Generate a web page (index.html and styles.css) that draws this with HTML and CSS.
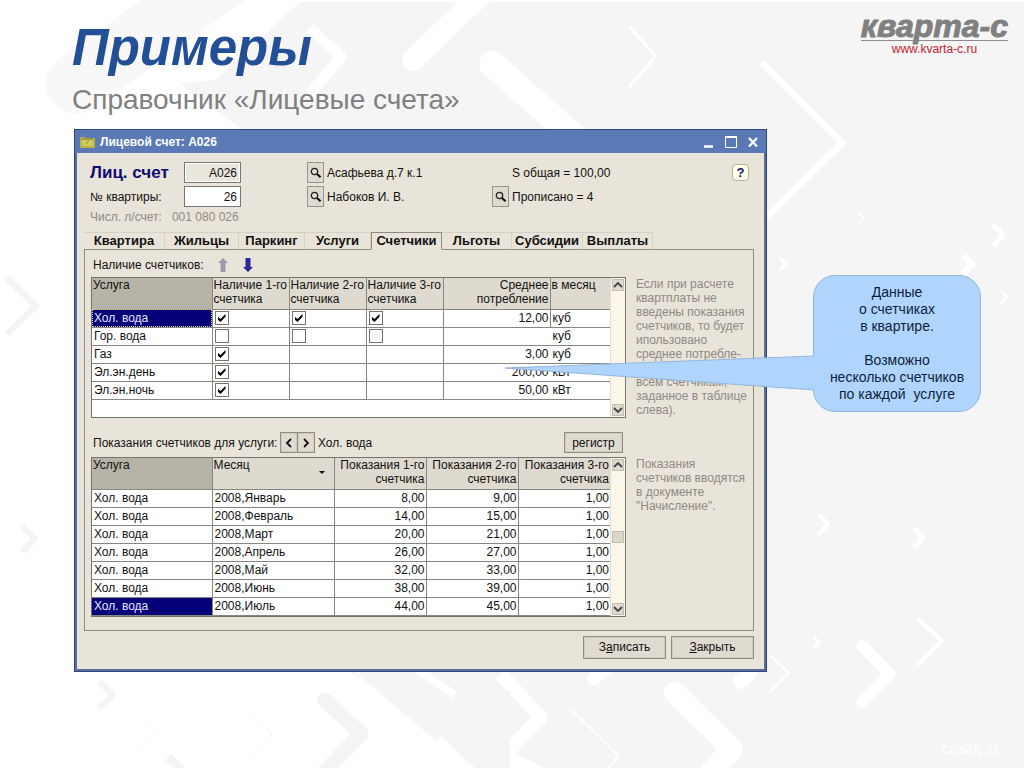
FILE: index.html
```html
<!DOCTYPE html>
<html lang="ru">
<head>
<meta charset="utf-8">
<title>Примеры — Справочник «Лицевые счета»</title>
<link rel="stylesheet" href="styles.css">
</head>
<body>
<svg class="symbols" aria-hidden="true">
  <symbol id="lens" viewBox="0 0 12 12"><circle cx="4.5" cy="4.5" r="3.2" fill="none" stroke="#222" stroke-width="1.3"/><path d="M7 7l3.600 3.200" stroke="#111" stroke-width="2.200"/></symbol>
  <symbol id="up" viewBox="0 0 10 6"><path d="M1 5l4-4 4 4" fill="none" stroke="#444" stroke-width="1.800"/></symbol>
  <symbol id="down" viewBox="0 0 10 6"><path d="M1 1l4 4 4-4" fill="none" stroke="#444" stroke-width="1.800"/></symbol>
</svg>
<main class="slide">
  <svg class="backdrop" viewBox="0 0 1024 768" preserveAspectRatio="xMidYMid slice" aria-hidden="true">
    <path d="M300 2H1024V768H545L350 672H400L240 420V128L180 84L215 80Z" fill="#f5f5f6"/>
    <path d="M235 -30L76 84" fill="none" stroke="#f8f8f9" stroke-width="60" stroke-linecap="round"/>
    <g fill="none" stroke="#fff" stroke-linejoin="round">
      <path d="M413 60L486 -10" stroke-width="22" stroke-linecap="round"/>
      <path d="M492 64L580 142" stroke-width="26" stroke-linecap="round"/>
      <path d="M310 28L341 57L310 94" stroke-width="11"/>
      <path d="M629 27L656 56L629 87" stroke-width="3"/>
      <path d="M762 63L842 143L767 217" stroke-width="7"/>
      <path d="M993 224L1003 235L993 246" stroke-width="5"/>
      <path d="M859 214L864 218L859 222" stroke-width="2"/>
      <path d="M780 258L785 264L780 270" stroke-width="3"/>
      <path d="M963 256L972 264L963 274" stroke-width="7"/>
      <path d="M1001 290L1007 297L1001 304" stroke-width="2"/>
      <path d="M818 514L828 524L818 535" stroke-width="4"/>
      <path d="M914 528L923 538L914 548" stroke-width="5"/>
      <path d="M917 618L942 641L917 665" stroke-width="4"/>
      <path d="M862 646L890 674L862 702" stroke-width="12" stroke-linecap="round"/>
      <path d="M770 655L789 673L769 693" stroke-width="2"/>
      <path d="M814 637L819 643L814 648" stroke-width="3"/>
      <path d="M675 693L732 749L700 784" stroke-width="22" stroke-linecap="round"/>
      <path d="M500 674L541 717L502 758" stroke-width="14"/>
      <path d="M572 710L619 756L608 768" stroke-width="2"/>
      <path d="M594 678L606 668M740 682L750 673" stroke-width="14" stroke-linecap="round"/>
    </g>
    <path d="M355 672H445L475 700L510 690V768H475L440 735L430 768Z" fill="#f5f5f6"/>
    <path d="M345 672H355L468 768H360V672Z" fill="#fff"/>
    <path d="M415 668L455 695" stroke="#fff" stroke-width="8"/>
    <g fill="none" stroke="#f4f4f5" stroke-linejoin="round">
      <path d="M325 700L361 734L325 771" stroke-width="15" stroke-linecap="round"/>
      <path d="M22 526L35 539L22 552" stroke-width="6"/>
      <path d="M99 682L113 695L99 708" stroke-width="6"/>
      <path d="M142 721L155 734L142 748M245 706L272 734L245 762" stroke-width="1"/>
      <path d="M7 278L36 306L7 334" stroke-width="6"/>
      <path d="M168 757L182 770" stroke-width="9"/>
    </g>
  </svg>

  <header class="slide-head">
    <div>
      <h1 class="title">Примеры</h1>
      <p class="subtitle">Справочник «Лицевые счета»</p>
    </div>
    <div class="brand">
      <div class="brand-name">кварта-с</div>
      <a class="brand-link" href="#">www.kvarta-c.ru</a>
    </div>
  </header>

  <section class="window" aria-label="Лицевой счет: A026">
    <div class="titlebar">
      <svg class="folder" viewBox="0 0 15 12" aria-hidden="true"><path d="M0 1h5l1 1h9v10H0z" fill="#b9b53f"/><path d="M2 5h5M9 5h4M2 7h4M8 7h5M2 9h11" stroke="#e6df83"/><path d="M1 3h12" stroke="#7e8140"/></svg>
      <h2 class="caption">Лицевой счет: A026</h2>
      <button class="win-btn" aria-label="Свернуть"><svg viewBox="0 0 12 12"><path d="M1 10.500h9" stroke="#fff" stroke-width="2.500"/></svg></button>
      <button class="win-btn" aria-label="Развернуть"><svg viewBox="0 0 12 12"><path d="M.5 1h11v10.500H.5z" fill="none" stroke="#fff"/><path d="M0 1h12" stroke="#fff" stroke-width="2"/></svg></button>
      <button class="win-btn" aria-label="Закрыть окно"><svg viewBox="0 0 12 12"><path d="M2 2l8 8.500M10 2l-8 8.500" stroke="#fff" stroke-width="2.200"/></svg></button>
    </div>

    <div class="account">
      <label class="account-label" for="acc">Лиц. счет</label>
      <input class="field locked" id="acc" value="A026" readonly>
      <button class="pick c-first" aria-label="Выбрать адрес"><svg><use href="#lens"/></svg></button>
      <span>Асафьева д.7 к.1</span>
      <span class="c-second">S общая = 100,00</span>
      <button class="help" aria-label="Справка">?</button>

      <label class="apt-label" for="apt">№ квартиры:</label>
      <input class="field" id="apt" value="26">
      <button class="pick c-first" aria-label="Выбрать владельца"><svg><use href="#lens"/></svg></button>
      <span>Набоков И. В.</span>
      <button class="pick" aria-label="Прописанные"><svg><use href="#lens"/></svg></button>
      <span class="c-second">Прописано = 4</span>

      <div class="numeric"><span>Числ. л/счет:</span><span>001 080 026</span></div>
    </div>

    <div class="tabs" role="tablist">
      <button class="tab" role="tab">Квартира</button>
      <button class="tab" role="tab">Жильцы</button>
      <button class="tab" role="tab">Паркинг</button>
      <button class="tab" role="tab">Услуги</button>
      <button class="tab active" role="tab" aria-selected="true">Счетчики</button>
      <button class="tab" role="tab">Льготы</button>
      <button class="tab" role="tab">Субсидии</button>
      <button class="tab" role="tab">Выплаты</button>
    </div>

    <div class="panel">
      <div class="bar first">
        <span class="bar-label">Наличие счетчиков:</span>
        <button class="arrow" aria-label="Вверх" disabled><svg viewBox="0 0 10 14"><path d="M5 0l5 5H7.500v9h-5V5H0z" fill="#9b9bae"/></svg></button>
        <button class="arrow" aria-label="Вниз"><svg viewBox="0 0 10 14"><path d="M5 14l5-5H7.500V0h-5v9H0z" fill="#2c2897"/></svg></button>
      </div>
      <div class="block">
        <div class="grid-box">
          <div class="sheet">
            <table class="grid">
              <colgroup><col class="w-120"><col class="w-77"><col class="w-77"><col class="w-77"><col class="w-107"><col class="w-60"></colgroup>
              <thead><tr><th class="sel">Услуга</th><th>Наличие 1-го<br>счетчика</th><th>Наличие 2-го<br>счетчика</th><th>Наличие 3-го<br>счетчика</th><th class="num">Среднее<br>потребление</th><th>в месяц</th></tr></thead>
              <tbody>
                <tr><td class="cur dotted">Хол. вода</td><td><input type="checkbox" class="tick" aria-label="Хол. вода, счетчик 1" checked></td><td><input type="checkbox" class="tick" aria-label="Хол. вода, счетчик 2" checked></td><td><input type="checkbox" class="tick" aria-label="Хол. вода, счетчик 3" checked></td><td class="num">12,00</td><td>куб</td></tr>
                <tr><td>Гор. вода</td><td><input type="checkbox" class="tick" aria-label="Гор. вода, счетчик 1"></td><td><input type="checkbox" class="tick" aria-label="Гор. вода, счетчик 2"></td><td><input type="checkbox" class="tick" aria-label="Гор. вода, счетчик 3"></td><td class="num open"></td><td>куб</td></tr>
                <tr><td>Газ</td><td><input type="checkbox" class="tick" aria-label="Газ, счетчик 1" checked></td><td></td><td></td><td class="num open">3,00</td><td>куб</td></tr>
                <tr><td>Эл.эн.день</td><td><input type="checkbox" class="tick" aria-label="Эл.эн.день, счетчик 1" checked></td><td></td><td></td><td class="num open">200,00</td><td>кВт</td></tr>
                <tr><td>Эл.эн.ночь</td><td><input type="checkbox" class="tick" aria-label="Эл.эн.ночь, счетчик 1" checked></td><td></td><td></td><td class="num open">50,00</td><td>кВт</td></tr>
              </tbody>
            </table>
          </div>
          <div class="scroll"><button class="scroll-btn" aria-label="Прокрутить вверх"><svg><use href="#up"/></svg></button><button class="scroll-btn" aria-label="Прокрутить вниз"><svg><use href="#down"/></svg></button></div>
        </div>
        <p class="note">Если при расчете<br>квартплаты не<br>введены показания<br>счетчиков, то будет<br>ипользовано<br>среднее потребле-<br>ние (суммарно по<br>всем счетчикам,<br>заданное в таблице<br>слева).</p>
      </div>

      <div class="bar second">
        <span class="bar-label">Показания счетчиков для услуги:</span>
        <span class="pager"><button class="btn step" aria-label="Предыдущая"><svg viewBox="0 0 8 10"><path d="M6 1L2 5l4 4" fill="none" stroke="#111" stroke-width="1.800"/></svg></button><button class="btn step" aria-label="Следующая"><svg viewBox="0 0 8 10"><path d="M2 1l4 4-4 4" fill="none" stroke="#111" stroke-width="1.800"/></svg></button></span>
        <span>Хол. вода</span>
        <button class="btn register">регистр</button>
      </div>
      <div class="block">
        <div class="grid-box">
          <div class="sheet">
            <table class="grid">
              <colgroup><col class="w-120"><col class="w-122"><col class="w-92"><col class="w-92"><col class="w-92"></colgroup>
              <thead><tr><th class="sel">Услуга</th><th><span class="sorted">Месяц</span></th><th class="num">Показания 1-го<br>счетчика</th><th class="num">Показания 2-го<br>счетчика</th><th class="num">Показания 3-го<br>счетчика</th></tr></thead>
              <tbody>
                <tr><td>Хол. вода</td><td>2008,Январь</td><td class="num">8,00</td><td class="num">9,00</td><td class="num">1,00</td></tr>
                <tr><td>Хол. вода</td><td>2008,Февраль</td><td class="num">14,00</td><td class="num">15,00</td><td class="num">1,00</td></tr>
                <tr><td>Хол. вода</td><td>2008,Март</td><td class="num">20,00</td><td class="num">21,00</td><td class="num">1,00</td></tr>
                <tr><td>Хол. вода</td><td>2008,Апрель</td><td class="num">26,00</td><td class="num">27,00</td><td class="num">1,00</td></tr>
                <tr><td>Хол. вода</td><td>2008,Май</td><td class="num">32,00</td><td class="num">33,00</td><td class="num">1,00</td></tr>
                <tr><td>Хол. вода</td><td>2008,Июнь</td><td class="num">38,00</td><td class="num">39,00</td><td class="num">1,00</td></tr>
                <tr><td class="cur">Хол. вода</td><td>2008,Июль</td><td class="num">44,00</td><td class="num">45,00</td><td class="num">1,00</td></tr>
              </tbody>
            </table>
          </div>
          <div class="scroll"><button class="scroll-btn" aria-label="Прокрутить вверх"><svg><use href="#up"/></svg></button><span class="thumb"></span><button class="scroll-btn" aria-label="Прокрутить вниз"><svg><use href="#down"/></svg></button></div>
        </div>
        <p class="note">Показания<br>счетчиков вводятся<br>в документе<br>"Начисление".</p>
      </div>
    </div>

    <div class="actions">
      <button class="btn action">З<u>а</u>писать</button>
      <button class="btn action"><u>З</u>акрыть</button>
    </div>
  </section>

  <aside class="callout">
    <svg class="pointer" viewBox="0 0 311 36" aria-hidden="true"><path d="M311 1L2 13L311 35" fill="#b0d5fd" stroke="#93b6db"/></svg>
    Данные<br>о счетчиках<br>в квартире.<br><br>Возможно<br>несколько счетчиков<br>по каждой&nbsp; услуге
  </aside>
  <div class="page-no">слайд 31</div>
</main>
</body>
</html>
```

FILE: styles.css
```css
* { box-sizing: border-box; }
body {
  margin: 0;
  background: #fff;
  font-family: "Liberation Sans", Arial, sans-serif;
  font-size: 12px;
  line-height: 14px;
  color: #111;
}
button, input { font: inherit; color: inherit; margin: 0; padding: 0; }
h1, h2, p { margin: 0; }
svg { display: block; }
.symbols { position: absolute; width: 0; height: 0; }

.slide {
  position: relative;
  min-height: 100vh;
  padding: 12px 16px 12px 74px;
  overflow: hidden;
}
.backdrop { position: absolute; inset: 0; width: 100%; height: 100%; }
.slide-head {
  position: relative;
  display: flex;
  justify-content: space-between;
  height: 117px;
  margin-left: -2px;
}
.title {
  font-size: 51px;
  line-height: 72px;
  font-style: italic;
  color: #224f96;
}
.subtitle { font-size: 28px; line-height: 32px; color: #808080; }
.brand { text-align: center; }
.brand-name {
  border-bottom: 1px solid #8d8d8d;
  font-size: 32px;
  line-height: 28px;
  font-weight: bold;
  font-style: italic;
  color: #808080;
  -webkit-text-stroke: 1px #808080;
}
.brand-link { color: #c32330; text-decoration: none; line-height: 16px; }

.window {
  position: relative;
  margin-right: 241px;
  border: 3px solid #5c6c9c;
  border-top: 0;
  outline: 1px solid #2c467c;
  outline-offset: -1px;
  background: #e9e4d9;
}
.titlebar {
  display: flex;
  align-items: center;
  gap: 10px;
  height: 24px;
  margin: 0 -3px;
  padding: 0 8px 0 6px;
  background: #5b79b4;
  border-top: 1px solid #4a64a0;
  color: #fff;
}
.folder { width: 15px; height: 12px; }
.caption { flex: 1; margin-left: -5px; font-size: 12px; line-height: 14px; }
.win-btn { width: 12px; height: 12px; border: 0; background: none; }

.account {
  display: grid;
  grid-template-columns: 94px 57px 66px 20px 165px 20px 1fr auto;
  grid-template-rows: 21px 21px 14px;
  row-gap: 3px;
  align-items: center;
  padding: 9px 15px 8px 13px;
}
.account-label { font-size: 17px; line-height: 20px; font-weight: bold; color: #0f0a70; }
.field {
  width: 57px;
  height: 21px;
  padding: 0 3px;
  border: 1px solid #777;
  background: #fff;
  text-align: right;
}
.field.locked { background: #e9e6dc; box-shadow: inset 0 0 0 1px #fff; }
.c-first { grid-column: 4; }
.c-second { grid-column: 7; }
.pick {
  display: grid;
  place-items: center;
  width: 17px;
  height: 21px;
  border: 1px solid #97948b;
  background: #dedad0;
}
.pick svg { width: 12px; height: 12px; }
.help {
  width: 17px;
  height: 17px;
  border: 1px solid #b5b29c;
  border-radius: 4px;
  background: #fffee5;
  font-size: 13px;
  font-weight: bold;
  color: #14147a;
}
.numeric { grid-column: 1 / 4; display: flex; gap: 10px; color: #8d8a84; }

.tabs {
  position: relative;
  display: grid;
  grid-template-columns: 81px 74px 66px 66px 71px 70px 71px 70px;
  margin: 0 10px -1px 7px;
}
.tab {
  height: 18px;
  border: 1px solid #d6d1c5;
  border-width: 1px 1px 0 0;
  border-bottom: 1px solid #8d8a82;
  background: none;
  font-size: 13px;
  font-weight: bold;
  white-space: nowrap;
}
.tab.active { border: 1px solid #8d8a82; border-bottom-color: #e9e4d9; background: #e9e4d9; }
.panel {
  margin: 0 10px 0 7px;
  padding: 0 8px 13px 6px;
  border: 1px solid #8d8a82;
}
.bar { display: flex; align-items: center; padding-left: 2px; }
.bar.first { height: 27px; padding-top: 3px; }
.bar.second { height: 39px; padding-top: 10px; }
.first .bar-label { width: 125px; }
.second .bar-label { min-width: 187px; }
.arrow { width: 10px; height: 14px; margin-right: 15px; border: 0; background: none; }
.btn { border: 1px solid #8f8c83; background: #e0dbd0; box-shadow: inset 0 0 0 1px #d0ccc0; }
.pager { display: flex; margin-right: 3px; }
.step { display: grid; place-items: center; width: 18px; height: 21px; }
.step + .step { margin-left: -1px; }
.step svg { width: 8px; height: 10px; }
.register { width: 59px; height: 21px; margin-left: auto; margin-right: 122px; }

.block { display: grid; grid-template-columns: 1fr 112px; gap: 10px; }
.grid-box {
  display: flex;
  min-height: 141px;
  align-self: start;
  border: 1px solid #77746c;
  background: #fff;
}
.sheet { flex: 1; min-width: 0; }
.grid { width: 100%; table-layout: fixed; border-collapse: collapse; }
.w-120 { width: 120px; }
.w-77 { width: 77px; }
.w-107 { width: 107px; }
.w-60 { width: 60px; }
.w-122 { width: 122px; }
.w-92 { width: 92px; }
.grid th, .grid td {
  padding: 0 1px;
  border: solid #888680;
  border-width: 0 1px 1px 0;
  text-align: left;
  white-space: nowrap;
}
.grid th:last-child, .grid td:last-child { border-right: 0; }
.grid td:last-child:not(.num) { padding-left: 2px; }
.grid th { height: 31px; background: #dfdacf; font-weight: normal; vertical-align: top; }
.grid th.sel { background: #b7b3a7; }
.grid td { height: 18px; padding: 0 2px; }
.grid .num { text-align: right; padding-right: 1px; }
.grid td.open { border-right-color: #fff; }
.grid td.cur { background: #060078; color: #e6e6ff; }
.grid td.dotted { outline: 1px dotted #d6d69a; outline-offset: -1px; }
.sorted { display: flex; justify-content: space-between; }
.sorted::after {
  content: "";
  margin: 13px 8px 0 0;
  border: 3px solid transparent;
  border-top-color: #111;
  border-bottom: 0;
}
.tick {
  display: grid;
  place-items: center;
  width: 14px;
  height: 14px;
  appearance: none;
  border: 1px solid #77746c;
  background: #fff;
}
.tick:checked::before {
  content: "";
  width: 8px;
  height: 8px;
  background: #000;
  clip-path: polygon(0 30%, 38% 62%, 100% 0, 100% 35%, 38% 100%, 0 68%);
}
.scroll {
  position: relative;
  display: flex;
  flex-direction: column;
  justify-content: space-between;
  width: 15px;
  padding: 1px;
  background: #faf6ea;
  border-left: 1px solid #e2ddd0;
}
.scroll-btn {
  display: grid;
  place-items: center;
  width: 12px;
  height: 12px;
  border: 1px solid #c3beb2;
  background: #dfdacf;
}
.scroll-btn svg { width: 10px; height: 6px; }
.thumb { height: 12px; border: 1px solid #c3beb2; background: #dcd8cc; }
.note { color: #8d8a84; white-space: nowrap; }

.actions { display: flex; justify-content: flex-end; gap: 5px; padding: 5px 10px 10px; }
.action { width: 83px; height: 23px; }

.callout {
  position: absolute;
  top: 275px;
  right: 43px;
  width: 168px;
  padding: 8px 0;
  border: 1px solid #93b6db;
  border-radius: 22px;
  background: #b0d5fd;
  font-size: 14px;
  line-height: 17px;
  text-align: center;
  color: #0d1e3c;
}
.pointer { position: absolute; right: 166px; top: 79px; width: 311px; height: 36px; }
.page-no {
  position: absolute;
  right: 24px;
  bottom: 12px;
  font-size: 14px;
  color: #fff;
}
```
